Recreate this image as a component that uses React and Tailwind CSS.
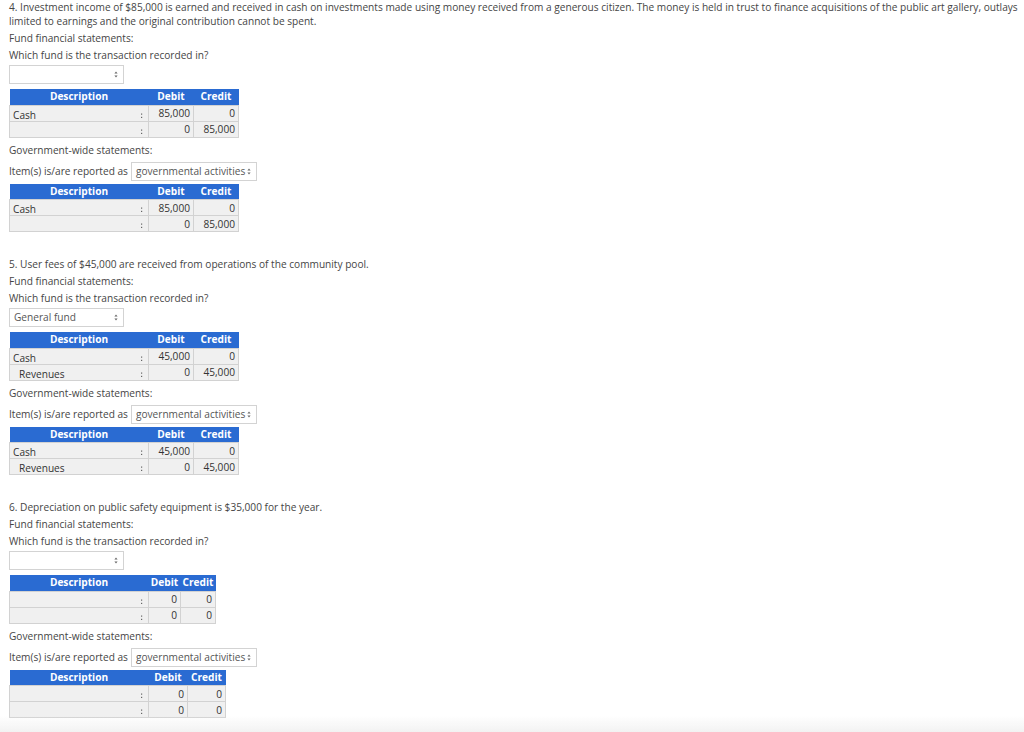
import React from "react";

const Arrows = () => (
  <svg width="4" height="7" viewBox="0 0 4 7" className="shrink-0">
    <path d="M2 0.5 L3.6 2.6 L0.4 2.6 Z" fill="#666" />
    <path d="M2 6.5 L3.6 4.4 L0.4 4.4 Z" fill="#666" />
  </svg>
);

const Select = ({ value = "", width = "w-[115px]", height = "h-[19px]" }) => (
  <div
    className={`${width} ${height} flex items-center justify-between border border-[#d3d3d3] bg-white pl-[4px] pr-[5px] text-[#555]`}
  >
    <span className="leading-none whitespace-nowrap">{value}</span>
    <Arrows />
  </div>
);

const Entry = ({ rows, debitW = "w-[45px]", creditW = "w-[45px]" }) => (
  <table className="border-collapse table-fixed">
    <thead>
      <tr className="bg-[#2a6bd2] text-white font-bold h-[16px]">
        <th className="w-[139px] p-0 text-center font-bold">Description</th>
        <th className={`${debitW} p-0 text-center font-bold`}>Debit</th>
        <th className={`${creditW} p-0 text-center font-bold`}>Credit</th>
      </tr>
    </thead>
    <tbody>
      {rows.map((r, i) => (
        <tr key={i} className="h-[16px] bg-[#f0f0f0]">
          <td className="border border-[#d2d2d2] p-0 align-bottom">
            <div className="flex items-end justify-between h-[15px] pr-[5px]">
              <span className={`leading-[11px] ${r.indent ? "pl-[9px]" : "pl-[3px]"} text-[#333]`}>{r.label}</span>
              <span className="mb-[2px]">
                <svg width="3" height="6" viewBox="0 0 3 6">
                  <rect x="1" y="0.5" width="1.2" height="1.2" fill="#666" />
                  <rect x="1" y="3.8" width="1.2" height="1.2" fill="#666" />
                </svg>
              </span>
            </div>
          </td>
          <td className="border border-[#d2d2d2] p-0 pr-[3px] text-right text-[#333] leading-[14px]">{r.debit}</td>
          <td className="border border-[#d2d2d2] p-0 pr-[3px] text-right text-[#333] leading-[14px]">{r.credit}</td>
        </tr>
      ))}
    </tbody>
  </table>
);

const Section = ({ question, fund, rows, debitW, creditW, debitW2, creditW2, first }) => (
  <div className={first ? "" : "mt-[25px]"}>
    <p className="leading-[14px]">{question}</p>
    <p className="mt-[3px] leading-[14px]">Fund financial statements:</p>
    <p className="mt-[3px] leading-[14px]">Which fund is the transaction recorded in?</p>
    <div className="mt-[3px]">
      <Select value={fund} />
    </div>
    <div className="mt-[5px]">
      <Entry rows={rows} debitW={debitW} creditW={creditW} />
    </div>
    <p className="mt-[5px] leading-[14px]">Government-wide statements:</p>
    <div className="mt-[5px] flex items-center gap-[3px]">
      <span className="leading-[14px]">Item(s) is/are reported as</span>
      <Select value="governmental activities" width="w-[126px]" />
    </div>
    <div className="mt-[3px]">
      <Entry rows={rows} debitW={debitW2 || debitW} creditW={creditW2 || creditW} />
    </div>
  </div>
);

export default function App() {
  return (
    <div
      className="min-h-[732px] bg-white pl-[9px] text-[10.15px] text-[#454545]"
      style={{ fontFamily: '"Open Sans", "Liberation Sans", sans-serif' }}
    >
      <Section
        first
        question="4. Investment income of $85,000 is earned and received in cash on investments made using money received from a generous citizen. The money is held in trust to finance acquisitions of the public art gallery, outlays limited to earnings and the original contribution cannot be spent."
        fund=""
        rows={[
          { label: "Cash", debit: "85,000", credit: "0" },
          { label: "", debit: "0", credit: "85,000" },
        ]}
      />
      <Section
        question="5. User fees of $45,000 are received from operations of the community pool."
        fund="General fund"
        rows={[
          { label: "Cash", debit: "45,000", credit: "0" },
          { label: "Revenues", indent: true, debit: "0", credit: "45,000" },
        ]}
      />
      <Section
        question="6. Depreciation on public safety equipment is $35,000 for the year."
        fund=""
        debitW="w-[32px]"
        creditW="w-[35px]"
        debitW2="w-[39px]"
        creditW2="w-[38px]"
        rows={[
          { label: "", debit: "0", credit: "0" },
          { label: "", debit: "0", credit: "0" },
        ]}
      />
      <div className="pointer-events-none fixed bottom-0 left-0 right-0 h-[16px] bg-gradient-to-b from-white/0 to-[#f2f2f2]" />
    </div>
  );
}
